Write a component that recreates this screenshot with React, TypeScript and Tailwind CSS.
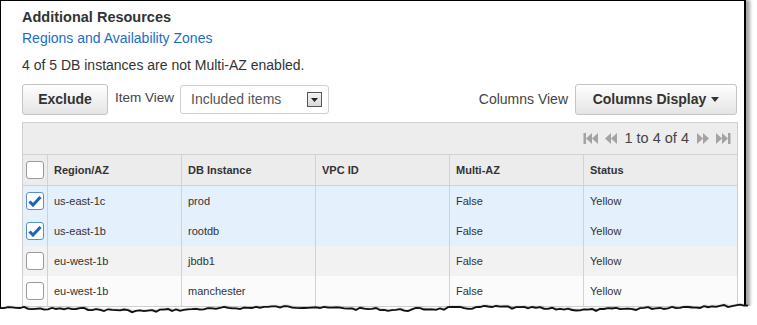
import React from 'react';

const rows = [
  { region: 'us-east-1c', db: 'prod', multi: 'False', status: 'Yellow', checked: true, bg: 'bg-[#e4f0fc]' },
  { region: 'us-east-1b', db: 'rootdb', multi: 'False', status: 'Yellow', checked: true, bg: 'bg-[#e4f0fc]' },
  { region: 'eu-west-1b', db: 'jbdb1', multi: 'False', status: 'Yellow', checked: false, bg: 'bg-[#f2f2f2]' },
  { region: 'eu-west-1b', db: 'manchester', multi: 'False', status: 'Yellow', checked: false, bg: 'bg-[#fbfbfb]' },
];

const Checkbox = ({ checked }: { checked: boolean }) => (
  <div
    className={`w-[18px] h-[18px] rounded-[3px] border bg-white flex items-center justify-center ${
      checked ? 'border-[#5b8fc7]' : 'border-[#9a9a9a]'
    }`}
  >
    {checked && (
      <svg width="14" height="12" viewBox="0 0 14 12">
        <path d="M1.5 6.5 L5 10 L12.5 2" fill="none" stroke="#1d63c0" strokeWidth="3" />
      </svg>
    )}
  </div>
);

const PagerIcon = ({ dir, edge }: { dir: 'left' | 'right'; edge?: boolean }) => (
  <svg width="16" height="13" viewBox="0 0 16 13" className={dir === 'right' ? 'scale-x-[-1]' : ''}>
    {edge && <rect x="0.5" y="1" width="2.5" height="11" fill="#a3a3a3" />}
    <polygon points={edge ? '3,6.5 9,1 9,12' : '1,6.5 7,1 7,12'} fill="#a3a3a3" />
    <polygon points={edge ? '9,6.5 15,1 15,12' : '7,6.5 13,1 13,12'} fill="#a3a3a3" />
  </svg>
);

const cols = ['w-[25px]', 'w-[134px]', 'w-[134px]', 'w-[134px]', 'w-[134px]', 'flex-1'];

// jagged torn-paper line
const tornPoints = (() => {
  const pts: string[] = [];
  let seed = 7;
  const rnd = () => {
    seed = (seed * 9301 + 49297) % 233280;
    return seed / 233280;
  };
  const base = [14, 15, 15, 16, 17, 16, 15, 14, 13, 13, 14, 15, 16, 15, 14, 13, 14, 15, 16, 15, 14, 13, 12, 11];
  for (let x = 0; x <= 748; x += 4) {
    const b = base[Math.min(base.length - 1, Math.floor(x / 32))];
    pts.push(`${x} ${(b + (rnd() - 0.5) * 2.4).toFixed(1)}`);
  }
  return pts;
})();
const tornLine = 'M' + tornPoints.join(' L');

const App = () => {
  return (
    <div className="relative w-[757px] h-[325px] bg-white overflow-hidden font-['Liberation_Sans',Arial,sans-serif] text-[#333]">
      <div className="w-[746px] h-[325px] border-l border-t border-r-2 border-black shadow-[4px_0_3px_rgba(0,0,0,0.35)] pl-[21px] pr-[7px]">
        <div className="pt-[8px] text-[14.5px] leading-[17px] font-bold">Additional Resources</div>
        <div className="mt-[4px] text-[14px] leading-[17px] text-[#1a6ec6]">Regions and Availability Zones</div>
        <div className="mt-[10px] text-[14px] leading-[17px] text-[#333]">4 of 5 DB instances are not Multi-AZ enabled.</div>

        {/* toolbar */}
        <div className="mt-[10px] flex items-center h-[31px]">
          <button className="h-[31px] w-[86px] rounded-[3px] border border-[#c4c4c4] bg-gradient-to-b from-white to-[#e4e4e4] text-[14px] font-bold text-[#333]">
            Exclude
          </button>
          <span className="ml-[7px] text-[13.5px] text-[#444] -mt-[3px]">Item View</span>
          <div className="ml-[6px] h-[29px] w-[149px] rounded-[3px] border border-[#d0d0d0] bg-white flex items-center justify-between pl-[10px] pr-[6px]">
            <span className="text-[14px] text-[#555]">Included items</span>
            <div className="w-[15px] h-[15px] border border-[#555] bg-gradient-to-b from-[#f4f4f4] to-[#d8d8d8] flex items-center justify-center">
              <svg width="7" height="4" viewBox="0 0 7 4">
                <polygon points="0,0 7,0 3.5,4" fill="#222" />
              </svg>
            </div>
          </div>
          <span className="ml-auto mr-[7px] text-[14px] text-[#444] -mt-[1px]">Columns View</span>
          <button className="h-[31px] w-[162px] rounded-[3px] border border-[#c4c4c4] bg-gradient-to-b from-white to-[#e4e4e4] text-[14px] font-bold text-[#333] flex items-center justify-center gap-[5px]">
            Columns Display
            <svg width="8" height="5" viewBox="0 0 8 5">
              <polygon points="0,0 8,0 4,5" fill="#333" />
            </svg>
          </button>
        </div>

        {/* table */}
        <div className="mt-[7px] border border-[#cfcfcf] w-[716px]">
          <div className="h-[32px] bg-[#ededed] flex items-center justify-end gap-[5px] pr-[6px] border-b border-[#d2d2d2]">
            <PagerIcon dir="left" edge />
            <PagerIcon dir="left" />
            <span className="text-[14.5px] text-[#444]">1 to 4 of 4</span>
            <PagerIcon dir="right" />
            <PagerIcon dir="right" edge />
          </div>
          <div className="flex h-[31px] bg-[#ececec] border-b border-[#d2d2d2] text-[11px] font-bold text-[#333]">
            <div className={`${cols[0]} border-r border-[#d2d2d2] flex items-center justify-center`}>
              <Checkbox checked={false} />
            </div>
            {['Region/AZ', 'DB Instance', 'VPC ID', 'Multi-AZ', 'Status'].map((h, i) => (
              <div
                key={h}
                className={`${cols[i + 1]} ${i < 4 ? 'border-r border-[#d2d2d2]' : ''} flex items-center pl-[6px]`}
              >
                {h}
              </div>
            ))}
          </div>
          {rows.map((r, idx) => (
            <div key={idx} className={`flex h-[30px] ${r.bg} text-[11px] text-[#333]`}>
              <div className={`${cols[0]} border-r border-[#d2d2d2] flex items-center justify-center`}>
                <Checkbox checked={r.checked} />
              </div>
              {[r.region, r.db, '', r.multi, r.status].map((v, i) => (
                <div
                  key={i}
                  className={`${cols[i + 1]} ${i < 4 ? 'border-r border-[#d2d2d2]' : ''} flex items-center pl-[6px]`}
                >
                  {v}
                </div>
              ))}
            </div>
          ))}
        </div>
      </div>

      {/* torn paper edge */}
      <svg className="absolute left-0 top-[294px]" width="757" height="31" viewBox="0 0 757 31">
        <defs>
          <filter id="sh" x="-5%" y="-80%" width="110%" height="260%">
            <feGaussianBlur stdDeviation="1.2" />
          </filter>
        </defs>
        <path d={tornLine} fill="none" stroke="#222" strokeWidth="4" filter="url(#sh)" transform="translate(1 2)" />
        <path d={`${tornLine} L757 11 L757 31 L0 31 Z`} fill="white" transform="translate(0 3.5)" />
        <path d={`${tornLine} L757 11 L757 31 L0 31 Z`} fill="white" />
        <path d={tornLine} fill="none" stroke="#111" strokeWidth="1.8" />
      </svg>
    </div>
  );
};

export default App;
